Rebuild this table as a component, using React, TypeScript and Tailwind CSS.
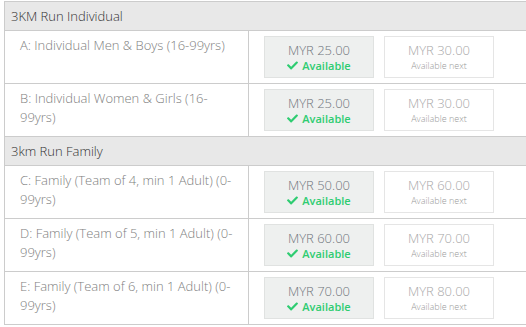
import React from "react";
import { FaCheck } from "react-icons/fa";

type Row = { label: string; now: string; next: string };
const groups: { title: string; rows: Row[] }[] = [
  {
    title: "3KM Run Individual",
    rows: [
      { label: "A: Individual Men & Boys (16-99yrs)", now: "MYR 25.00", next: "MYR 30.00" },
      { label: "B: Individual Women & Girls (16-99yrs)", now: "MYR 25.00", next: "MYR 30.00" },
    ],
  },
  {
    title: "3km Run Family",
    rows: [
      { label: "C: Family (Team of 4, min 1 Adult) (0-99yrs)", now: "MYR 50.00", next: "MYR 60.00" },
      { label: "D: Family (Team of 5, min 1 Adult) (0-99yrs)", now: "MYR 60.00", next: "MYR 70.00" },
      { label: "E: Family (Team of 6, min 1 Adult) (0-99yrs)", now: "MYR 70.00", next: "MYR 80.00" },
    ],
  },
];

export default function App() {
  return (
    <div className="w-[526px] h-[327px] bg-white pt-[1px] pl-[4px] overflow-hidden font-light" style={{ fontFamily: "'Open Sans', sans-serif" }}>
      <div className="border-l border-t border-[#cccccc]">
        {groups.map((g) => (
          <div key={g.title}>
            <div className="h-[29px] bg-[#e8e8e8] border-b border-[#cccccc] pl-[6px] text-[13px] leading-[28px] text-[#333]">
              {g.title}
            </div>
            {g.rows.map((r) => (
              <div key={r.label} className="flex h-[53px] border-b border-[#cccccc]">
                <div className="w-[244px] border-r border-[#cccccc] pl-[15px] pr-[8px] pt-[5px] text-[13px] leading-[19px] text-[#808080]">
                  {r.label}
                </div>
                <div className="flex gap-[10px] pl-[15px] pt-[5px]">
                  <div className="w-[110px] h-[42px] bg-[#eef0ef] border border-[#e0e2e1] flex flex-col items-center justify-center">
                    <div className="text-[13px] leading-[16px] text-[#6f757c]">{r.now}</div>
                    <div className="flex items-center gap-[4px] text-[11px] leading-[15px] font-semibold text-[#2ecc71]">
                      <FaCheck className="w-[11px] h-[11px]" />
                      <span>Available</span>
                    </div>
                  </div>
                  <div className="w-[110px] h-[42px] bg-white border border-[#e5e5e5] flex flex-col items-center justify-center">
                    <div className="text-[13px] leading-[16px] text-[#a8a8a8]">{r.next}</div>
                    <div className="text-[9px] leading-[15px] text-[#9a9a9a]">Available next</div>
                  </div>
                </div>
              </div>
            ))}
          </div>
        ))}
      </div>
    </div>
  );
}
